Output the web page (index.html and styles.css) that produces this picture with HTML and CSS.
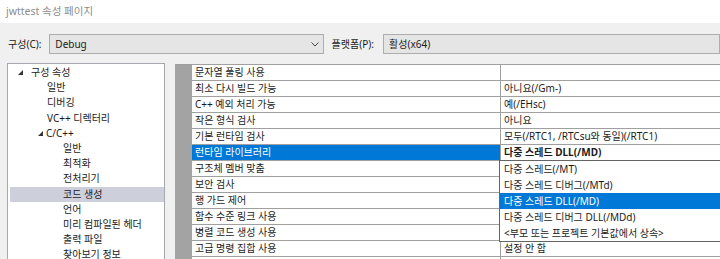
FILE: index.html
```html
<!DOCTYPE html>
<html>
<head>
<meta name="viewport" content="width=device-width, initial-scale=1">
<link rel="stylesheet" href="styles.css">
</head>
<body>
<div class="titlebar">jwttest 속성 페이지</div>

<!-- configuration / platform pickers -->
<div class="toolbar">
  <span class="label cfg">구성(C):</span>
  <div class="combo cfgbox">
    <span>Debug</span>
    <svg class="chev" width="8" height="5" viewBox="0 0 8 5"><polyline points="0.5,0.5 4,4 7.5,0.5" fill="none" stroke="#444" stroke-width="1"/></svg>
  </div>
  <span class="label plat">플랫폼(P):</span>
  <div class="combo platbox"><span>활성(x64)</span></div>
</div>

<div class="main">
  <!-- property tree -->
  <div class="tree">
    <div class="node lv0"><svg class="tri" width="5" height="5" viewBox="0 0 5 5"><polygon points="5,0 5,5 0,5" fill="#333"/></svg>구성 속성</div>
    <div class="node lv1">일반</div>
    <div class="node lv1">디버깅</div>
    <div class="node lv1">VC++ 디렉터리</div>
    <div class="node lv1 open"><svg class="tri" width="5" height="5" viewBox="0 0 5 5"><polygon points="5,0 5,5 0,5" fill="#333"/></svg>C/C++</div>
    <div class="node lv2">일반</div>
    <div class="node lv2">최적화</div>
    <div class="node lv2">전처리기</div>
    <div class="node lv2 current">코드 생성</div>
    <div class="node lv2">언어</div>
    <div class="node lv2">미리 컴파일된 헤더</div>
    <div class="node lv2">출력 파일</div>
    <div class="node lv2">찾아보기 정보</div>
  </div>

  <!-- property grid -->
  <div class="grid">
    <div class="gutter"></div>
    <div class="rows">
      <div class="row"><div class="name">문자열 풀링 사용</div><div class="val"></div></div>
      <div class="row"><div class="name">최소 다시 빌드 가능</div><div class="val">아니요(/Gm-)</div></div>
      <div class="row"><div class="name">C++ 예외 처리 가능</div><div class="val">예(/EHsc)</div></div>
      <div class="row"><div class="name">작은 형식 검사</div><div class="val">아니요</div></div>
      <div class="row"><div class="name">기본 런타임 검사</div><div class="val">모두(/RTC1, /RTCsu와 동일)(/RTC1)</div></div>
      <div class="row selected"><div class="name">런타임 라이브러리</div><div class="val bold">다중 스레드 DLL(/MD)
        <div class="dropdown">
          <div class="opt">다중 스레드(/MT)</div>
          <div class="opt">다중 스레드 디버그(/MTd)</div>
          <div class="opt active">다중 스레드 DLL(/MD)</div>
          <div class="opt">다중 스레드 디버그 DLL(/MDd)</div>
          <div class="opt">&lt;부모 또는 프로젝트 기본값에서 상속&gt;</div>
        </div>
      </div></div>
      <div class="row"><div class="name">구조체 멤버 맞춤</div><div class="val"></div></div>
      <div class="row"><div class="name">보안 검사</div><div class="val"></div></div>
      <div class="row"><div class="name">행 가드 제어</div><div class="val"></div></div>
      <div class="row"><div class="name">함수 수준 링크 사용</div><div class="val"></div></div>
      <div class="row"><div class="name">병렬 코드 생성 사용</div><div class="val"></div></div>
      <div class="row"><div class="name">고급 명령 집합 사용</div><div class="val">설정 안 함</div></div>
      <div class="row"><div class="name"></div><div class="val"></div></div>
    </div>
  </div>
</div>
</body>
</html>
```

FILE: styles.css
```css
html, body {
  margin: 0;
  height: 259px;
  overflow: hidden;
}
body {
  background: #f0f0f0;
  font-family: "Noto Sans", "Noto Sans CJK KR", sans-serif;
  font-size: 10px;
  color: #1b1b1b;
}
/* window title */
.titlebar {
  height: 23px;
  line-height: 23px;
  background: #fff;
  padding-left: 6px;
  color: #8c8c8c;
  font-size: 10.5px;
}
/* pickers row */
.toolbar {
  display: flex;
  align-items: center;
  padding-top: 11px;
  height: 20px;
}
.label {
  line-height: 20px;
}
.cfg {
  padding-left: 8px;
  width: 45px;
}
.plat {
  margin-left: 8px;
  width: 56px;
}
.combo {
  height: 18px;
  line-height: 18px;
  border: 1px solid #adadad;
  background: #e5e5e5;
  padding-left: 5px;
  box-sizing: content-box;
  display: flex;
  align-items: center;
}
.cfgbox {
  width: 291px;
}
.cfgbox span {
  flex: 1;
}
.chev {
  margin-right: 4px;
}
.platbox {
  width: 330px;
  flex: none;
}
/* tree + grid */
.main {
  display: flex;
  align-items: flex-start;
  margin-top: 9px;
}
.tree {
  margin-left: 7px;
  width: 156px;
  height: 220px;
  border: 1px solid #a5a8b0;
  background: #fff;
  padding-top: 1px;
}
.node {
  height: 15.2px;
  line-height: 15.2px;
  white-space: nowrap;
  display: flex;
  align-items: center;
}
.lv0 { padding-left: 10px; }
.lv1 { padding-left: 39px; }
.lv1.open { padding-left: 30px; }
.lv2 { padding-left: 55px; }
.tri {
  margin-right: 8px;
  flex: none;
}
.lv1.open .tri {
  margin-right: 3px;
}
.current {
  background: #cdcfdb;
  margin-left: 2px;
  padding-left: 53px;
}
.grid {
  margin-left: 10px;
  margin-top: 1px;
  flex: 1;
  display: flex;
  border-top: 1px solid #a0a0a0;
  height: 220px;
}
.gutter {
  width: 17px;
  background: #a3a3a3;
  flex: none;
}
.rows {
  flex: 1;
  background: #fff;
}
.row {
  display: flex;
  height: 15px;
  line-height: 15px;
  border-bottom: 1px solid #a0a0a0;
  white-space: nowrap;
}
.name {
  width: 305px;
  padding-left: 3px;
  border-right: 1px solid #a0a0a0;
  flex: none;
}
.val {
  flex: 1;
  padding-left: 3px;
  position: relative;
}
.bold {
  font-weight: bold;
}
.selected .name {
  background: #0078d7;
  color: #fff;
}
/* open combo list for the runtime library value */
.dropdown {
  position: absolute;
  top: 15px;
  left: -2px;
  width: 230px;
  background: #fff;
  border: 1px solid #646464;
  font-weight: normal;
  z-index: 2;
}
.opt {
  height: 16px;
  line-height: 16px;
  padding-left: 4px;
}
.opt.active {
  background: #0078d7;
  color: #fff;
}
```
